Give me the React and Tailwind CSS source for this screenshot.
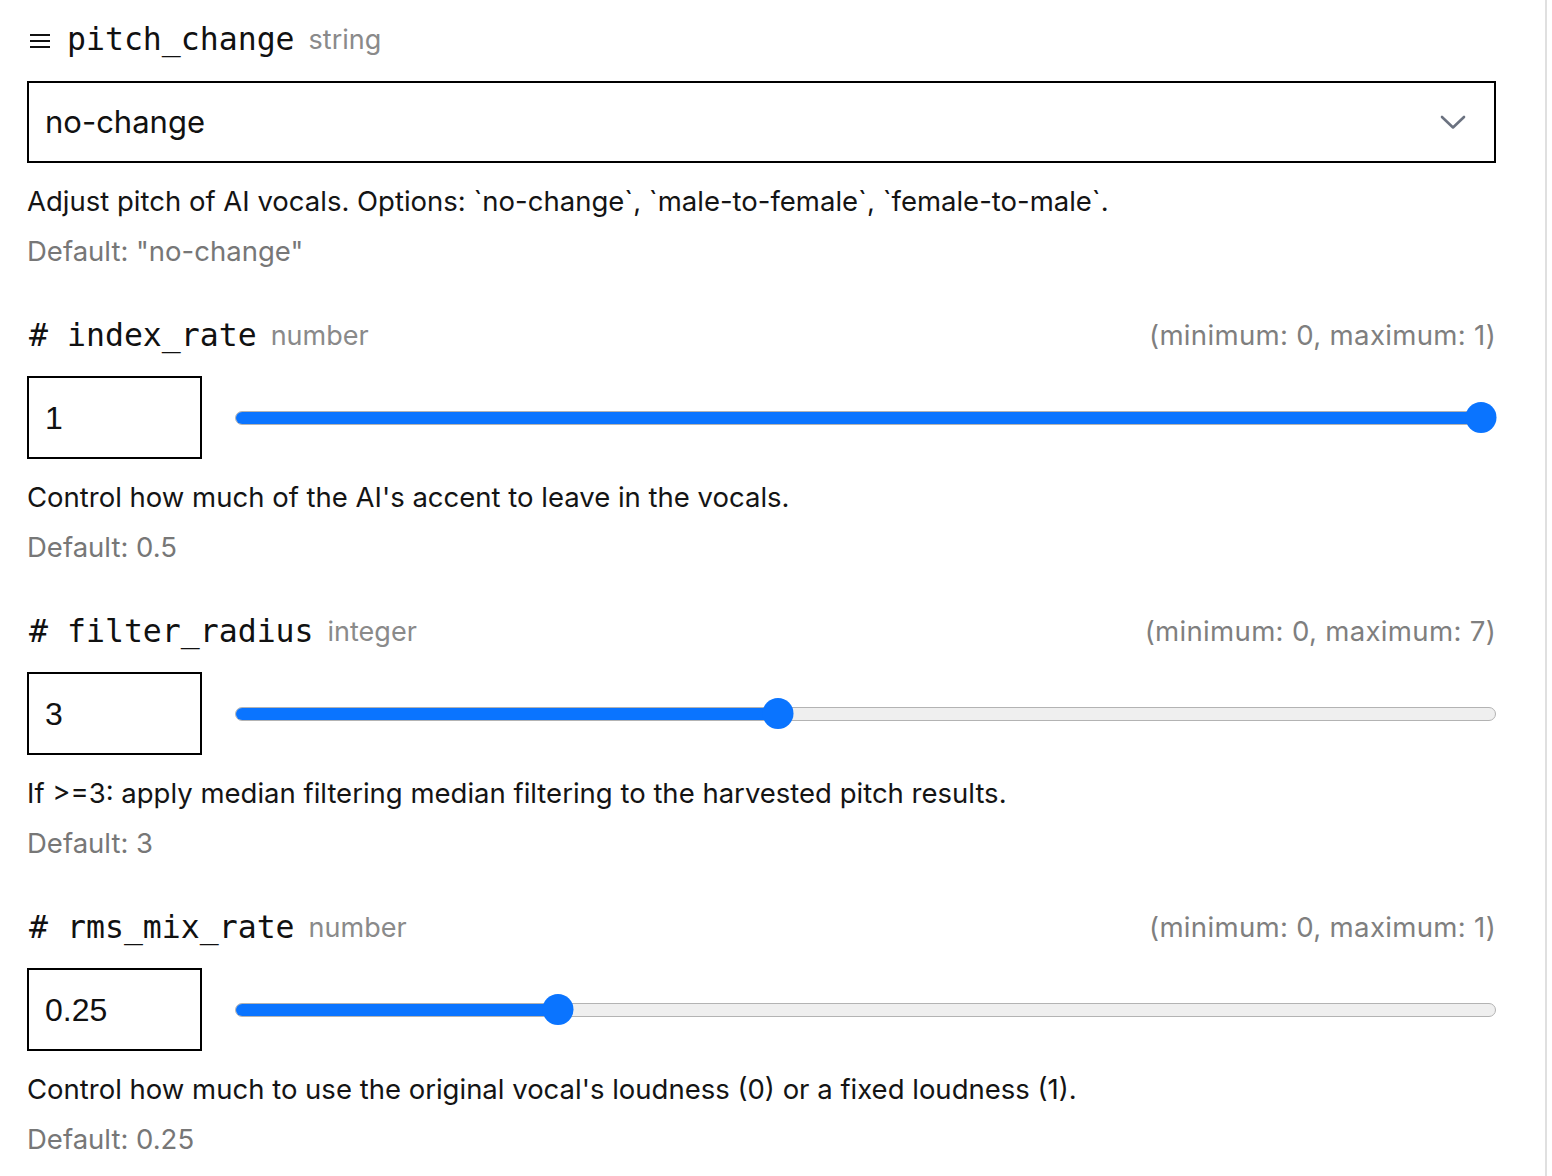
const sans = "font-['Inter','Noto_Sans',sans-serif]"
const mono = "font-['DejaVu_Sans_Mono','Liberation_Mono',monospace]"

function MenuIcon() {
  return (
    <svg width="22" height="16" viewBox="0 0 22 16" className="shrink-0 mt-[2px]">
      <path d="M1 2h20M1 8h20M1 14h20" stroke="#111" strokeWidth="2" />
    </svg>
  )
}

function Chevron() {
  return (
    <svg width="26" height="16" viewBox="0 0 26 16" className="shrink-0">
      <path d="M2 3L13 13.5L24 3" fill="none" stroke="#6b7280" strokeWidth="2.6" strokeLinecap="round" strokeLinejoin="round" />
    </svg>
  )
}

function Heading({ icon, name, type, range }) {
  return (
    <div className="flex items-center h-[48px]">
      {icon === 'menu' ? (
        <span className="w-[40px] pl-[2px] flex items-center"><MenuIcon /></span>
      ) : (
        <span className={`${mono} text-[31.5px] text-[#111] w-[40px] pl-[2px]`}>#</span>
      )}
      <span className={`${mono} text-[31.5px] text-[#111] leading-none`}>{name}</span>
      <span className={`${sans} text-[27px] text-[#8a8a8a] ml-[14px]`}>{type}</span>
      {range && (
        <span className={`${sans} text-[27.6px] tracking-[0.3px] text-[#7f7f7f] ml-auto`}>{range}</span>
      )}
    </div>
  )
}

function Slider({ value, min, max }) {
  const frac = (value - min) / (max - min)
  return (
    <div className="relative flex-1 h-[31px] flex items-center">
      <div className="w-full h-[14px] rounded-full border border-[#b3b3b3] bg-[#efefef] overflow-hidden">
        <div
          className="h-full rounded-full bg-[#0a74ff] border border-[#3b6db8] -m-px box-content"
          style={{ width: `calc(15px + ${frac} * (100% - 30px))` }}
        />
      </div>
      <div className="absolute inset-y-0 left-[15px] right-[15px]">
        <div
          className="absolute top-0 w-[31px] h-[31px] -translate-x-1/2 rounded-full bg-[#0a74ff]"
          style={{ left: `${frac * 100}%` }}
        />
      </div>
    </div>
  )
}

function Notes({ desc, def }) {
  return (
    <div className={`${sans} text-[27.5px] mt-[13px]`}>
      <p className="leading-[50px] text-[#141414]">{desc}</p>
      <p className="leading-[50px] text-[#777]">{def}</p>
    </div>
  )
}

const numberFields = [
  {
    name: 'index_rate',
    type: 'number',
    range: '(minimum: 0, maximum: 1)',
    value: '1',
    num: 1,
    min: 0,
    max: 1,
    desc: "Control how much of the AI's accent to leave in the vocals.",
    def: 'Default: 0.5',
  },
  {
    name: 'filter_radius',
    type: 'integer',
    range: '(minimum: 0, maximum: 7)',
    value: '3',
    num: 3,
    min: 0,
    max: 7,
    desc: 'If >=3: apply median filtering median filtering to the harvested pitch results.',
    def: 'Default: 3',
  },
  {
    name: 'rms_mix_rate',
    type: 'number',
    range: '(minimum: 0, maximum: 1)',
    value: '0.25',
    num: 0.25,
    min: 0,
    max: 1,
    desc: "Control how much to use the original vocal's loudness (0) or a fixed loudness (1).",
    def: 'Default: 0.25',
  },
]

export default function App() {
  return (
    <div className="w-[1547px] h-[1176px] bg-white border-r-2 border-[#e0e0e0] pl-[27px] pr-[49px] pt-[16px] overflow-hidden">
      <section>
        <Heading icon="menu" name="pitch_change" type="string" />
        <div className="mt-[17px] h-[82px] border-2 border-black flex items-center justify-between pl-[16px] pr-[28px]">
          <span className={`${sans} text-[31px] text-[#111]`}>no-change</span>
          <Chevron />
        </div>
        <Notes
          desc="Adjust pitch of AI vocals. Options: `no-change`, `male-to-female`, `female-to-male`."
          def={'Default: "no-change"'}
        />
      </section>

      {numberFields.map(f => (
        <section key={f.name} className="mt-[36px]">
          <Heading icon="hash" name={f.name} type={f.type} range={f.range} />
          <div className="mt-[16px] flex items-center gap-[33px]">
            <div className="w-[175px] h-[83px] border-2 border-black flex items-center pl-[16px]">
              <span className="font-['Liberation_Sans','Arial',sans-serif] text-[32px] text-[#111]">{f.value}</span>
            </div>
            <Slider value={f.num} min={f.min} max={f.max} />
          </div>
          <Notes desc={f.desc} def={f.def} />
        </section>
      ))}
    </div>
  )
}
